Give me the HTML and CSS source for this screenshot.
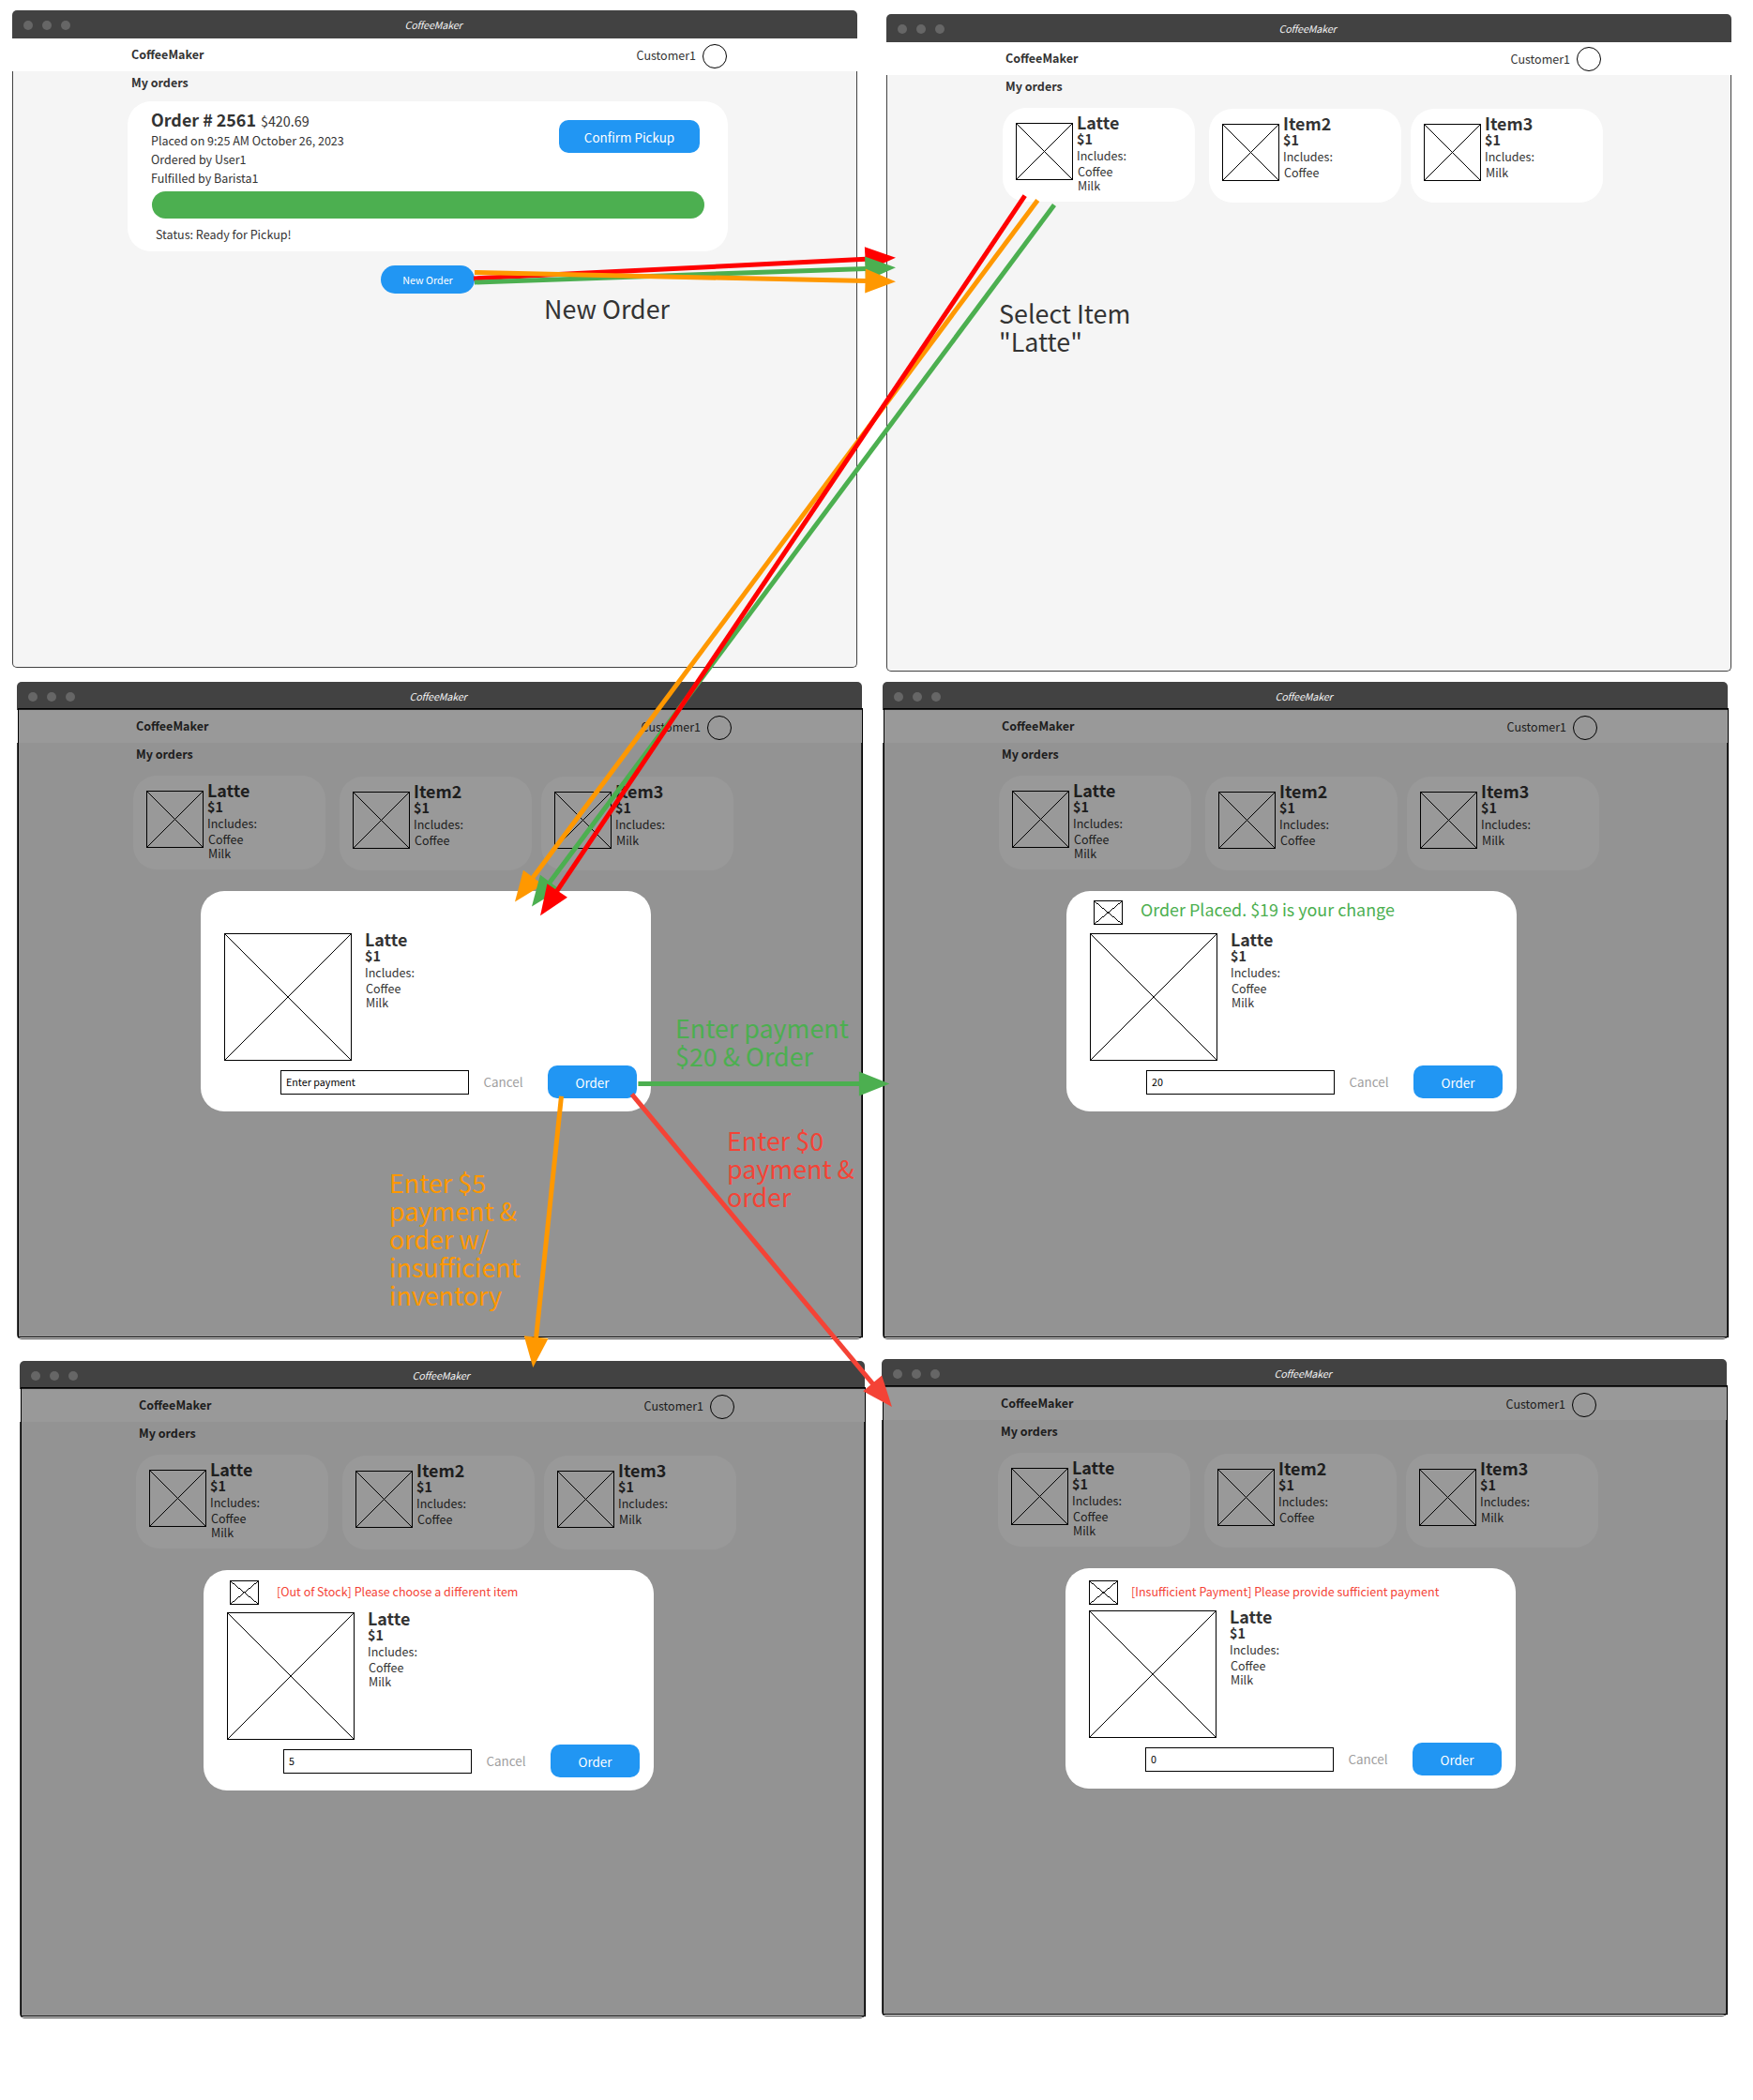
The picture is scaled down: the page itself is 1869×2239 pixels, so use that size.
FILE: index.html
```html
<!DOCTYPE html>
<html lang="en">
<head>
<meta charset="utf-8">
<title>CoffeeMaker ordering flow</title>
<link rel="stylesheet" href="styles.css">
</head>
<body>
<svg class="defs" width="0" height="0">
  <symbol id="placeholder" viewBox="0 0 100 100" preserveAspectRatio="none">
    <path d="M0 0L100 100M100 0L0 100" fill="none" stroke="#000" vector-effect="non-scaling-stroke" shape-rendering="crispEdges"/>
  </symbol>
</svg>
<main class="board">

  <section class="window w1">
    <div class="titlebar"><i class="dot"></i><i class="dot"></i><i class="dot"></i><span class="title">CoffeeMaker</span></div>
    <header class="appbar"><b class="brand">CoffeeMaker</b><span class="user">Customer1</span><span class="avatar"></span></header>
    <div class="page">
      <h2 class="heading">My orders</h2>
      <article class="order">
        <div class="order-top">
          <div class="order-info">
            <div class="order-title"><b class="order-no">Order # 2561</b><span class="order-price">$420.69</span></div>
            <p class="order-line">Placed on 9:25 AM October 26, 2023</p>
            <p class="order-line">Ordered by User1</p>
            <p class="order-line">Fulfilled by Barista1</p>
          </div>
          <button class="btn confirm">Confirm Pickup</button>
        </div>
        <div class="progress"></div>
        <p class="status">Status: Ready for Pickup!</p>
      </article>
      <button class="btn new-order">New Order</button>
    </div>
  </section>

  <section class="window w2">
    <div class="titlebar"><i class="dot"></i><i class="dot"></i><i class="dot"></i><span class="title">CoffeeMaker</span></div>
    <header class="appbar"><b class="brand">CoffeeMaker</b><span class="user">Customer1</span><span class="avatar"></span></header>
    <div class="page">
      <h2 class="heading">My orders</h2>
      <div class="items">
        <article class="item"><svg class="thumb"><use href="#placeholder"/></svg><div class="info"><b class="name">Latte</b><b class="price">$1</b><span class="label">Includes:</span><ul class="parts"><li>Coffee</li><li>Milk</li></ul></div></article>
        <article class="item"><svg class="thumb"><use href="#placeholder"/></svg><div class="info"><b class="name">Item2</b><b class="price">$1</b><span class="label">Includes:</span><ul class="parts"><li>Coffee</li></ul></div></article>
        <article class="item"><svg class="thumb"><use href="#placeholder"/></svg><div class="info"><b class="name">Item3</b><b class="price">$1</b><span class="label">Includes:</span><ul class="parts"><li>Milk</li></ul></div></article>
      </div>
    </div>
  </section>

  <section class="window w3">
    <div class="titlebar"><i class="dot"></i><i class="dot"></i><i class="dot"></i><span class="title">CoffeeMaker</span></div>
    <header class="appbar"><b class="brand">CoffeeMaker</b><span class="user">Customer1</span><span class="avatar"></span></header>
    <div class="page">
      <h2 class="heading">My orders</h2>
      <div class="items">
        <article class="item"><svg class="thumb"><use href="#placeholder"/></svg><div class="info"><b class="name">Latte</b><b class="price">$1</b><span class="label">Includes:</span><ul class="parts"><li>Coffee</li><li>Milk</li></ul></div></article>
        <article class="item"><svg class="thumb"><use href="#placeholder"/></svg><div class="info"><b class="name">Item2</b><b class="price">$1</b><span class="label">Includes:</span><ul class="parts"><li>Coffee</li></ul></div></article>
        <article class="item"><svg class="thumb"><use href="#placeholder"/></svg><div class="info"><b class="name">Item3</b><b class="price">$1</b><span class="label">Includes:</span><ul class="parts"><li>Milk</li></ul></div></article>
      </div>
    </div>
    <div class="scrim"></div>
    <div class="modal">
      <div class="notice"></div>
      <div class="detail"><svg class="photo"><use href="#placeholder"/></svg><div class="info"><b class="name">Latte</b><b class="price">$1</b><span class="label">Includes:</span><ul class="parts"><li>Coffee</li><li>Milk</li></ul></div></div>
      <div class="actions"><div class="field">Enter payment</div><span class="cancel">Cancel</span><button class="btn submit">Order</button></div>
    </div>
  </section>

  <section class="window w4">
    <div class="titlebar"><i class="dot"></i><i class="dot"></i><i class="dot"></i><span class="title">CoffeeMaker</span></div>
    <header class="appbar"><b class="brand">CoffeeMaker</b><span class="user">Customer1</span><span class="avatar"></span></header>
    <div class="page">
      <h2 class="heading">My orders</h2>
      <div class="items">
        <article class="item"><svg class="thumb"><use href="#placeholder"/></svg><div class="info"><b class="name">Latte</b><b class="price">$1</b><span class="label">Includes:</span><ul class="parts"><li>Coffee</li><li>Milk</li></ul></div></article>
        <article class="item"><svg class="thumb"><use href="#placeholder"/></svg><div class="info"><b class="name">Item2</b><b class="price">$1</b><span class="label">Includes:</span><ul class="parts"><li>Coffee</li></ul></div></article>
        <article class="item"><svg class="thumb"><use href="#placeholder"/></svg><div class="info"><b class="name">Item3</b><b class="price">$1</b><span class="label">Includes:</span><ul class="parts"><li>Milk</li></ul></div></article>
      </div>
    </div>
    <div class="scrim"></div>
    <div class="modal">
      <div class="notice success"><svg class="badge"><use href="#placeholder"/></svg><span class="message">Order Placed. $19 is your change</span></div>
      <div class="detail"><svg class="photo"><use href="#placeholder"/></svg><div class="info"><b class="name">Latte</b><b class="price">$1</b><span class="label">Includes:</span><ul class="parts"><li>Coffee</li><li>Milk</li></ul></div></div>
      <div class="actions"><div class="field">20</div><span class="cancel">Cancel</span><button class="btn submit">Order</button></div>
    </div>
  </section>

  <section class="window w5">
    <div class="titlebar"><i class="dot"></i><i class="dot"></i><i class="dot"></i><span class="title">CoffeeMaker</span></div>
    <header class="appbar"><b class="brand">CoffeeMaker</b><span class="user">Customer1</span><span class="avatar"></span></header>
    <div class="page">
      <h2 class="heading">My orders</h2>
      <div class="items">
        <article class="item"><svg class="thumb"><use href="#placeholder"/></svg><div class="info"><b class="name">Latte</b><b class="price">$1</b><span class="label">Includes:</span><ul class="parts"><li>Coffee</li><li>Milk</li></ul></div></article>
        <article class="item"><svg class="thumb"><use href="#placeholder"/></svg><div class="info"><b class="name">Item2</b><b class="price">$1</b><span class="label">Includes:</span><ul class="parts"><li>Coffee</li></ul></div></article>
        <article class="item"><svg class="thumb"><use href="#placeholder"/></svg><div class="info"><b class="name">Item3</b><b class="price">$1</b><span class="label">Includes:</span><ul class="parts"><li>Milk</li></ul></div></article>
      </div>
    </div>
    <div class="scrim"></div>
    <div class="modal">
      <div class="notice stock"><svg class="badge"><use href="#placeholder"/></svg><span class="message">[Out of Stock] Please choose a different item</span></div>
      <div class="detail"><svg class="photo"><use href="#placeholder"/></svg><div class="info"><b class="name">Latte</b><b class="price">$1</b><span class="label">Includes:</span><ul class="parts"><li>Coffee</li><li>Milk</li></ul></div></div>
      <div class="actions"><div class="field">5</div><span class="cancel">Cancel</span><button class="btn submit">Order</button></div>
    </div>
  </section>

  <section class="window w6">
    <div class="titlebar"><i class="dot"></i><i class="dot"></i><i class="dot"></i><span class="title">CoffeeMaker</span></div>
    <header class="appbar"><b class="brand">CoffeeMaker</b><span class="user">Customer1</span><span class="avatar"></span></header>
    <div class="page">
      <h2 class="heading">My orders</h2>
      <div class="items">
        <article class="item"><svg class="thumb"><use href="#placeholder"/></svg><div class="info"><b class="name">Latte</b><b class="price">$1</b><span class="label">Includes:</span><ul class="parts"><li>Coffee</li><li>Milk</li></ul></div></article>
        <article class="item"><svg class="thumb"><use href="#placeholder"/></svg><div class="info"><b class="name">Item2</b><b class="price">$1</b><span class="label">Includes:</span><ul class="parts"><li>Coffee</li></ul></div></article>
        <article class="item"><svg class="thumb"><use href="#placeholder"/></svg><div class="info"><b class="name">Item3</b><b class="price">$1</b><span class="label">Includes:</span><ul class="parts"><li>Milk</li></ul></div></article>
      </div>
    </div>
    <div class="scrim"></div>
    <div class="modal">
      <div class="notice payment"><svg class="badge"><use href="#placeholder"/></svg><span class="message">[Insufficient Payment] Please provide sufficient payment</span></div>
      <div class="detail"><svg class="photo"><use href="#placeholder"/></svg><div class="info"><b class="name">Latte</b><b class="price">$1</b><span class="label">Includes:</span><ul class="parts"><li>Coffee</li><li>Milk</li></ul></div></div>
      <div class="actions"><div class="field">0</div><span class="cancel">Cancel</span><button class="btn submit">Order</button></div>
    </div>
  </section>

  <!-- Flow arrows between the windows -->
  <svg class="arrows" width="1869" height="2239" viewBox="0 0 1869 2239">
    <defs>
      <marker id="head" markerUnits="userSpaceOnUse" markerWidth="34" markerHeight="28" refX="0.5" refY="13.5" orient="auto" overflow="visible">
        <path d="M0 0.5L32.5 13.5L0 26.5Z" fill="context-stroke"/>
      </marker>
    </defs>
    <g fill="none" stroke-width="5">
      <path class="red" d="M505 297L923 276.3" marker-end="url(#head)"/>
      <path class="green" d="M506 301L923 286.4" marker-end="url(#head)"/>
      <path class="orange" d="M506 290.5L923 299.6" marker-end="url(#head)"/>
      <path class="orange" d="M1106.3 213.5L568.1 935.8" marker-end="url(#head)"/>
      <path class="green" d="M1124 218.5L586.1 940.8" marker-end="url(#head)"/>
      <path class="red" d="M1092.7 208.7L593.9 949.8" marker-end="url(#head)"/>
      <path class="green" d="M680.4 1155.5L916.4 1155.5" marker-end="url(#head)"/>
      <path class="coral" d="M673.6 1166.7L930.5 1475.3" marker-end="url(#head)"/>
      <path class="orange" d="M598.5 1168.7L571.6 1426.1" marker-end="url(#head)"/>
    </g>
  </svg>

  <p class="note n1">New Order</p>
  <p class="note n2">Select Item<br>"Latte"</p>
  <p class="note n3">Enter payment<br>$20 &amp; Order</p>
  <p class="note n4">Enter $0<br>payment &amp;<br>order</p>
  <p class="note n5">Enter $5<br>payment &amp;<br>order w/<br>insufficient<br>inventory</p>
</main>
</body>
</html>
```
FILE: styles.css
```css
* { box-sizing: border-box; }
body {
  margin: 0;
  background: #fff;
  color: #333;
  font-family: "Noto Sans CJK SC", "Noto Sans CJK JP", sans-serif;
  font-size: 12.53px;
}
h2, p, ul { margin: 0; padding: 0; font-weight: normal; list-style: none; }
button { border: 0; padding: 0; font: inherit; }
svg { display: block; }
.defs { position: absolute; }
.board { position: relative; width: 1869px; height: 2239px; overflow: hidden; }

/* Windows placed on the board */
.window { position: absolute; width: 901px; height: 701px; display: flex; flex-direction: column; }
.w1 { left: 13px; top: 11px; }
.w2 { left: 945px; top: 15px; }
.w3 { left: 18px; top: 727px; }
.w4 { left: 941px; top: 727px; }
.w5 { left: 21px; top: 1451px; }
.w6 { left: 940px; top: 1449px; }

.titlebar {
  display: grid;
  grid-template-columns: 10px 10px 10px 1fr 62px;
  gap: 10px;
  align-items: center;
  height: 30px;
  padding: 0 11.5px;
  border-radius: 5px 5px 0 0;
  background: #424242;
}
.dot { width: 10px; height: 10px; border-radius: 50%; background: #666; }
.title { color: #f5f5f5; font-size: 10.74px; font-style: italic; line-height: 30px; text-align: center; letter-spacing: -0.15px; padding: 1px 0 0 9px; }

.appbar { display: flex; align-items: flex-start; height: 35px; padding: 0 139px 0 127px; background: #fff; line-height: 35px; }
.brand { flex: 1; line-height: 34px; }
.avatar { width: 26px; height: 26px; margin: 6px 0 0 7px; border: 1px solid #000; border-radius: 50%; }
.w2 .avatar { margin-top: 5px; }

.page { flex: 1; padding: 1px 0 0 126px; border: 1px solid #424242; border-top: 0; border-radius: 0 0 5px 5px; background: #f5f5f5; }
.heading { font-size: inherit; font-weight: bold; line-height: 22px; }

/* Order card */
.order { width: 640px; height: 160px; margin: 9px 0 0 -4px; padding: 4px 25px 0; border-radius: 25px; background: #fff; }
.order-top { display: flex; justify-content: space-between; height: 92px; }
.order-title { display: flex; align-items: baseline; gap: 5px; height: 28px; padding-top: 1px; line-height: 28px; }
.order-no { font-size: 17.9px; }
.order-price { font-size: 14.3px; }
.order-line { line-height: 20px; }
.btn { color: #fff; background: #2196f3; font-size: 13.43px; }
.confirm { width: 150px; height: 35px; margin: 16px 5px 0 0; border-radius: 10px; }
.progress { width: 589px; height: 29px; margin-left: 1px; border-radius: 15px; background: #4caf50; }
.status { padding: 7px 0 0 5px; line-height: 20px; }
.new-order { display: block; width: 100px; height: 30px; margin: 15px 0 0 266px; border-radius: 15px; font-size: 10.74px; }

/* Item cards */
.items { display: flex; align-items: flex-start; margin: 12px 0 0 -3px; }
.item { display: flex; gap: 4px; width: 205px; height: 100px; padding: 0 14px; border-radius: 25px; background: #fff; }
.item:nth-child(2) { margin: 1px 10px 0 15px; }
.item:nth-child(3) { margin-top: 1px; }
.thumb { width: 61px; height: 61px; margin-top: 16px; border: 1px solid #000; }
.info { display: flex; flex-direction: column; padding-top: 5px; }
.name { font-size: 17.9px; line-height: 20px; }
.price { font-size: 14.3px; line-height: 16px; }
.label { padding-top: 1px; line-height: 18px; }
.parts { padding-left: 1px; line-height: 15px; }

/* Modal layer */
.scrim { position: absolute; left: 1px; top: 28px; width: 901px; height: 671px; border: 1px solid #000; background: rgba(0, 0, 0, .4); }
.modal { position: absolute; left: 196px; top: 223px; width: 480px; height: 235px; border-radius: 25px; background: #fff; }
.notice { display: flex; align-items: flex-start; height: 45px; }
.badge { width: 31px; height: 26px; border: 1px solid #000; }
.success { padding: 10px 0 0 29px; gap: 19px; color: #4caf50; font-size: 17.9px; line-height: 18px; }
.stock { padding: 11px 0 0 28px; gap: 19px; color: #f44336; line-height: 24px; }
.payment { padding: 13px 0 0 25px; gap: 14px; color: #f44336; line-height: 24px; }
.detail { display: flex; gap: 14px; height: 141px; padding-left: 25px; }
.detail .info { padding-top: 0; margin-top: -4px; }
.photo { width: 136px; height: 136px; border: 1px solid #000; }
.actions { display: flex; align-items: flex-start; padding-left: 85px; }
.field { width: 201px; height: 26px; margin-top: 5px; padding-left: 5px; border: 1px solid #000; color: #000; font-size: 10.74px; line-height: 24px; }
.cancel { width: 84px; padding-left: 15.5px; color: #9e9e9e; font-size: 13.43px; line-height: 34px; }
.submit { width: 95px; height: 35px; border-radius: 10px; }

/* Arrows and notes over the windows */
.arrows { position: absolute; left: 0; top: 0; }
.red { stroke: #f00; }
.green { stroke: #4caf50; }
.orange { stroke: #ff9800; }
.coral { stroke: #f44336; }
.note { position: absolute; font-size: 26.86px; line-height: 30px; white-space: nowrap; }
.n1 { left: 580px; top: 314px; }
.n2 { left: 1065px; top: 319px; }
.n3 { left: 720px; top: 1081px; color: #4caf50; }
.n4 { left: 775px; top: 1201px; color: #f44336; }
.n5 { left: 415px; top: 1246px; color: #ff9800; }
```
